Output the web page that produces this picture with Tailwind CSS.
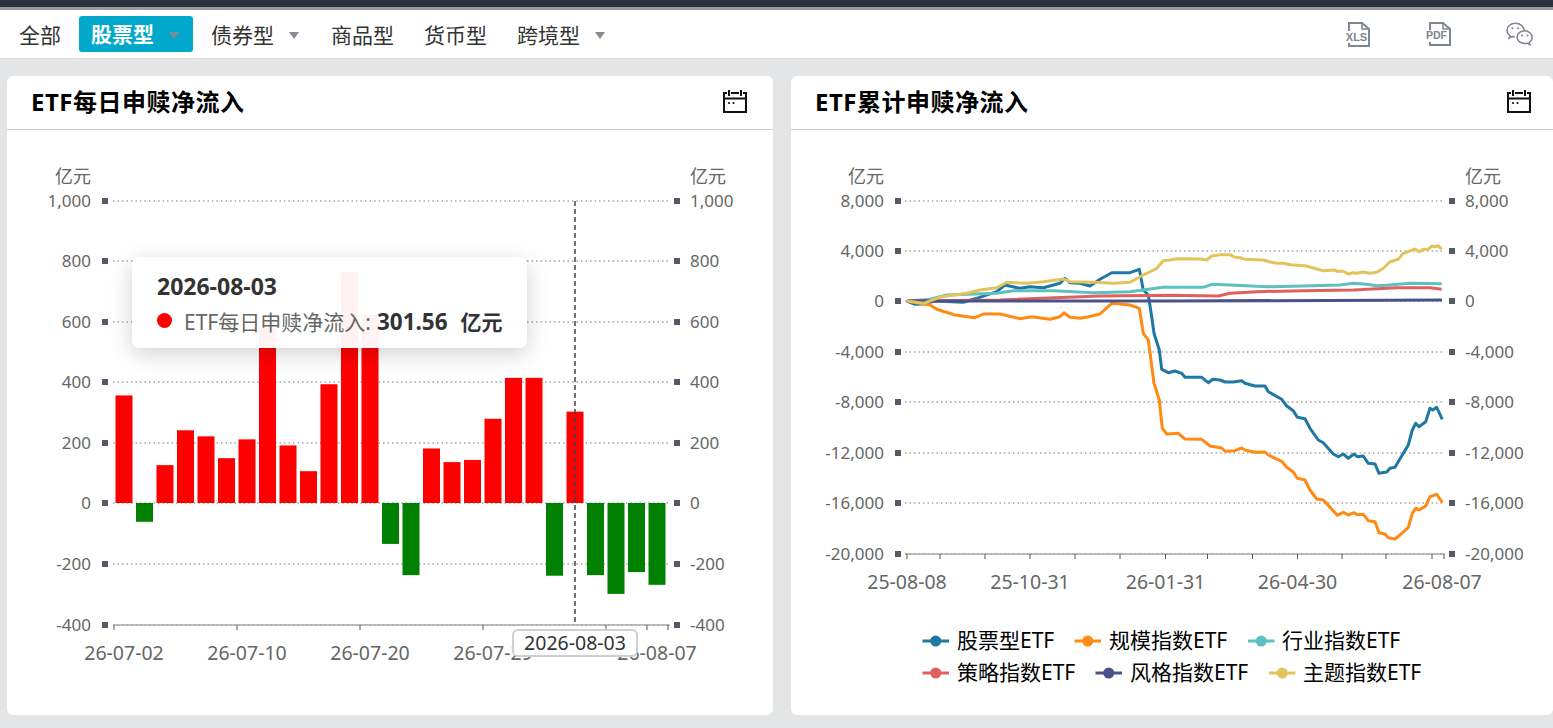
<!DOCTYPE html>
<html lang="zh-CN">
<head>
  <meta charset="UTF-8" />
  <title>ETF申赎</title>
  <script src="https://cdn.jsdelivr.net/npm/@tailwindcss/browser@4"></script>
</head>
<body class="h-[728px] overflow-hidden bg-[#e4e5e7] font-['Noto_Sans','Noto_Sans_CJK_SC',sans-serif] text-[#333]">
  <div class="h-[7px] bg-[#2d2f3a]"></div>
  <div class="h-[3px] bg-[#9a9a9a]"></div>

  <!-- tabs -->
  <nav class="flex h-[49px] items-center border-b border-[#dcdcdc] bg-white pl-[19px] pr-[19px] text-[21px]">
    <a class="mr-[17px] w-[43px] whitespace-nowrap pt-[3px]">全部</a>
    <a class="mr-[18px] flex h-[36px] w-[114px] items-center rounded-[3px] bg-[#00a9cb] pl-[12px] pt-[2px] font-bold text-white">
      股票型<span class="ml-[15px] h-0 w-0 border-x-[5px] border-t-[7px] border-x-transparent border-t-[#7f8b97]"></span>
    </a>
    <a class="flex items-center pt-[3px]">债券型<span class="ml-[15px] h-0 w-0 border-x-[5px] border-t-[7px] border-x-transparent border-t-[#868b95]"></span></a>
    <a class="ml-[32px] pt-[3px]">商品型</a>
    <a class="ml-[30px] pt-[3px]">货币型</a>
    <a class="ml-[30px] flex items-center pt-[3px]">跨境型<span class="ml-[15px] h-0 w-0 border-x-[5px] border-t-[7px] border-x-transparent border-t-[#868b95]"></span></a>
    <div class="ml-auto flex items-center">
      <svg width="27" height="27" viewBox="0 0 27 27" class="mr-[53px]" fill="none" stroke="#7f8691" stroke-width="2">
        <path d="M4 10V2h13l7 6v17H4v-3" /><path d="M17 2v6h7" stroke-width="1.500" />
        <text x="11.500" y="20" text-anchor="middle" font-size="11" font-weight="700" fill="#7f8691" stroke="none" font-family="Liberation Sans">XLS</text>
      </svg>
      <svg width="27" height="27" viewBox="0 0 27 27" class="mr-[54px]" fill="none" stroke="#7f8691" stroke-width="2">
        <path d="M5 9V2h13l7 6v16H5v-3" /><path d="M18 2v6h7" stroke-width="1.500" />
        <text x="11.500" y="18" text-anchor="middle" font-size="10.500" font-weight="700" fill="#7f8691" stroke="none" font-family="Liberation Sans">PDF</text>
      </svg>
      <svg width="28" height="24" viewBox="0 0 28 24" fill="none" stroke="#7f8691" stroke-width="1.500">
        <path d="M9.500 1.200C4.900 1.200 1 4.300 1 8.200c0 2.200 1.200 4 3 5.300l-.8 2.500 3-1.500c.9.300 1.700.400 2.600.400" />
        <path d="M18.500 8.800c-.6-4.300-4.300-7.600-9-7.600" />
        <path d="M18.800 8.700c-4.300 0-7.800 2.900-7.800 6.400s3.500 6.400 7.800 6.400c.8 0 1.600-.1 2.300-.3l2.700 1.500-.7-2.400c1.800-1.200 3-3 3-4.900 0-3.500-3.500-6.700-7.300-6.700z" />
        <circle cx="6.500" cy="6.200" r="1" fill="#7f8691" stroke="none" /><circle cx="12" cy="6.200" r="1" fill="#7f8691" stroke="none" />
        <circle cx="16" cy="13.500" r="1" fill="#7f8691" stroke="none" /><circle cx="21.500" cy="13.500" r="1" fill="#7f8691" stroke="none" />
      </svg>
    </div>
  </nav>

  <main class="mt-[17px] flex gap-[18px] pl-[7px]">
    <!-- daily -->
    <section class="relative h-[639px] w-[766px] rounded-[6px] bg-white">
      <header class="flex h-[54px] items-center justify-between border-b border-[#ccc] pb-[2px] pl-[24px] pr-[26px]">
        <h2 class="text-[24px] leading-none font-bold tracking-[0.5px] text-black">ETF每日申赎净流入</h2>
        <svg width="24" height="23" viewBox="0 0 24 23" fill="none" stroke="#111" stroke-width="2">
          <path d="M4 3H1v19h22V3h-3M8 3h8M1 8.500h22" /><path d="M6 0v6M18 0v6" />
          <circle cx="6" cy="13" r="1.100" fill="#111" stroke="none" /><circle cx="10.500" cy="13" r="1.100" fill="#111" stroke="none" />
        </svg>
      </header>
      <svg id="daily" width="766" height="585" viewBox="7 130 766 585" class="block"></svg>

      <div class="absolute top-[181px] left-[125px] h-[91px] w-[395px] rounded-[8px] bg-white/95 pt-[14px] pl-[25px] shadow-[0_6px_22px_rgba(0,0,0,0.18)]">
        <div class="text-[23px] leading-[30px] font-bold text-[#333]">2026-08-03</div>
        <div class="mt-[2px] flex items-center whitespace-nowrap leading-[32px]">
          <span class="h-[15px] w-[15px] rounded-full bg-[#ff0000]"></span>
          <span class="ml-[12px] pt-[3px] text-[21px] text-[#666]">ETF每日申赎净流入:</span>
          <span class="ml-[6px] pt-[3px] text-[22.500px] font-bold">301.56</span>
          <span class="ml-[13px] pt-[3px] text-[21px] font-bold">亿元</span>
        </div>
      </div>
      <div class="absolute top-[553px] left-[505px] flex h-[28px] w-[126px] items-center justify-center rounded-[6px] border-2 border-[#d0d0d4] bg-white text-[19.500px] text-[#333]">2026-08-03</div>
    </section>

    <!-- cumulative -->
    <section class="h-[639px] flex-1 rounded-[6px] bg-white">
      <header class="flex h-[54px] items-center justify-between border-b border-[#ccc] pb-[2px] pl-[24px] pr-[22px]">
        <h2 class="text-[24px] leading-none font-bold tracking-[0.5px] text-black">ETF累计申赎净流入</h2>
        <svg width="24" height="23" viewBox="0 0 24 23" fill="none" stroke="#111" stroke-width="2">
          <path d="M4 3H1v19h22V3h-3M8 3h8M1 8.500h22" /><path d="M6 0v6M18 0v6" />
          <circle cx="6" cy="13" r="1.100" fill="#111" stroke="none" /><circle cx="10.500" cy="13" r="1.100" fill="#111" stroke="none" />
        </svg>
      </header>
      <svg id="total" width="762" height="585" viewBox="791 130 762 585" class="block"></svg>
    </section>
  </main>

  <script>
    const grey = '#666';

    function txt(x, y, s, anchor, size, fill) {
      return `<text x="${x}" y="${y}" text-anchor="${anchor}" dominant-baseline="central" font-size="${size}" fill="${fill}">${s}</text>`;
    }

    // shared frame of both charts: dotted grid, square ticks, value labels, x axis
    function frame(o) {
      let out = '';
      o.rows.forEach(([y, label]) => {
        out += `<line x1="${o.x0}" x2="${o.x1}" y1="${y}" y2="${y}" stroke="#a5a5a5" stroke-width="1.500" stroke-dasharray="1.500 3" />`;
        out += `<rect x="${o.tl}" y="${y - 3}" width="6" height="6" fill="#555a66" />`;
        out += `<rect x="${o.tr}" y="${y - 3}" width="6" height="6" fill="#555a66" />`;
        out += txt(o.ll, y - 1, label, 'end', 17, grey) + txt(o.lr, y - 1, label, 'start', 17, grey);
      });
      out += txt(o.ll, 176, '亿元', 'end', 18, grey) + txt(o.lr, 176, '亿元', 'start', 18, grey);
      out += `<line x1="${o.x0}" x2="${o.x1}" y1="${o.base}" y2="${o.base}" stroke="#aaa" stroke-width="1.500" />`;
      o.ticks.forEach(x => { out += `<line x1="${x}" x2="${x}" y1="${o.base}" y2="${o.base + 5}" stroke="#555" />`; });
      o.dates.forEach(([x, s]) => { out += txt(x, o.base + 27, s, 'middle', 19.5, grey); });
      return out;
    }

    // daily chart
    const dailyVals = [355, -62, 125, 240, 220, 148, 210, 577, 190, 105, 392, 762, 620, -135, -238, 180, 135, 142, 278, 413, 413, -240, 301.56, -238, -300, -228, -270];
    let daily = frame({
      x0: 113, x1: 670, tl: 102, tr: 674, ll: 91, lr: 690, base: 625,
      rows: [[201, '1,000'], [261, '800'], [322, '600'], [382, '400'], [443, '200'], [503, '0'], [564, '-200'], [625, '-400']],
      ticks: [114, 237, 360, 483, 606, 647, 668],
      dates: [[124, '26-07-02'], [247, '26-07-10'], [370, '26-07-20'], [493, '26-07-29'], [657, '26-08-07']]
    });
    dailyVals.forEach((v, i) => {
      const cx = 124 + i * 20.5, h = Math.abs(v) * 0.303, y = v > 0 ? 503 - h : 503;
      daily += `<rect x="${cx - 8.5}" y="${y}" width="17" height="${h}" fill="${v > 0 ? '#ff0000' : '#008000'}" />`;
    });
    daily += `<line x1="575" x2="575" y1="201" y2="625" stroke="#444" stroke-width="1.500" stroke-dasharray="5 3" />`;
    document.getElementById('daily').innerHTML = daily;

    // cumulative chart, points traced from the picture
    const a = (x, y) => [880 + x / 3, 240 + y / 3];
    const b = (x, y) => [1130 + x / 3, 320 + y / 3];
    const c = (x, y) => [1170 + x / 3, 240 + y / 3];
    const pts = (fn, list) => list.map(p => fn(p[0], p[1]));
    const series = [
      ['#1f78a4', [
        ...pts(a, [[80,183],[105,193],[130,192],[165,183],[215,185],[250,187],[290,175],[350,155],[375,135],[420,145],[450,140],[490,143],[540,130],[555,115],[570,128],[600,130],[630,138],[660,118],[695,98],[750,98],[778,88],[790,150],[805,165],[815,230]]),
        ...pts(b, [[72,40],[88,90],[95,148],[115,158],[135,153],[155,160],[165,172],[215,172],[235,188],[248,178],[270,180],[285,186],[310,186],[335,182],[345,190],[375,198],[405,198],[415,215],[455,238],[470,258],[490,272],[502,292],[525,296],[540,325],[565,360],[580,368],[610,402],[625,410],[640,402],[655,415],[672,402],[682,410],[700,408],[715,430],[735,432],[747,460],[770,456],[780,445],[795,442],[835,375],[847,330],[857,310],[867,320],[887,305],[900,265],[908,270],[920,262],[937,298]])
      ]],
      ['#ff8a14', [
        ...pts(a, [[80,183],[150,195],[170,208],[225,225],[285,233],[310,222],[360,222],[420,236],[455,230],[510,238],[540,230],[552,218],[570,232],[600,235],[625,230],[660,222],[695,190],[750,195],[778,205],[790,280],[805,300]]),
        ...pts(b, [[72,190],[88,240],[97,325],[110,342],[145,340],[165,357],[215,358],[240,378],[275,384],[285,394],[315,392],[335,384],[345,390],[375,397],[405,396],[415,405],[455,424],[470,442],[490,456],[502,475],[525,480],[540,510],[560,537],[580,540],[622,586],[640,577],[655,585],[672,578],[682,584],[700,583],[715,602],[735,605],[747,638],[765,642],[775,653],[795,657],[810,645],[835,622],[847,580],[857,565],[867,570],[887,558],[900,530],[920,523],[937,547]])
      ]],
      ['#5fc0c0', [
        ...pts(a, [[80,183],[150,178],[200,165],[350,160],[400,152],[520,152],[640,158],[750,155],[850,142]]),
        ...pts(c, [[0,142],[100,142],[125,133],[180,135],[290,140],[400,138],[510,135],[550,130],[590,133],[620,137],[650,136],[720,130],[815,131]])
      ]],
      ['#e06060', [
        [907,301],[1000,300],[1100,296],
        ...pts(c, [[0,166],[145,168],[180,160],[260,155],[400,152],[550,150],[680,143],[780,143],[815,148]])
      ]],
      ['#4a5288', [[907,301],[1170,301],[1442,300]]],
      ['#e3c45c', [
        ...pts(a, [[80,183],[130,190],[185,170],[260,160],[300,150],[350,143],[380,127],[440,130],[490,125],[550,117],[570,125],[640,127],[700,130],[750,127],[790,105],[830,85],[850,62]]),
        ...pts(c, [[0,60],[20,56],[90,57],[110,60],[125,48],[150,44],[180,44],[195,52],[210,53],[225,58],[280,60],[300,66],[320,70],[340,70],[360,74],[405,77],[430,84],[460,92],[495,90],[500,94],[520,94],[535,102],[550,98],[560,100],[580,96],[600,100],[620,97],[640,85],[660,65],[685,58],[700,40],[735,27],[748,35],[760,28],[775,28],[785,18],[795,20],[805,17],[815,28]])
      ]]
    ];
    let total = frame({
      x0: 905, x1: 1445, tl: 895, tr: 1449, ll: 884, lr: 1465, base: 554,
      rows: [[201, '8,000'], [251, '4,000'], [301, '0'], [352, '-4,000'], [402, '-8,000'], [453, '-12,000'], [503, '-16,000'], [554, '-20,000']],
      ticks: [907, 940, 985, 1030, 1075, 1120, 1165.5, 1207.5, 1252.5, 1297.5, 1342, 1386, 1432, 1444],
      dates: [[907, '25-08-08'], [1030, '25-10-31'], [1165.5, '26-01-31'], [1297.5, '26-04-30'], [1442, '26-08-07']]
    });
    series.forEach(([color, p]) => {
      total += `<polyline fill="none" stroke="${color}" stroke-width="3" stroke-linejoin="round" points="${p.map(q => q[0].toFixed(1) + ',' + q[1].toFixed(1)).join(' ')}" />`;
    });

    // legend: line start, text start, row y
    [
      [922.5, 957, 641, '股票型ETF', 0],
      [1074.5, 1109, 641, '规模指数ETF', 1],
      [1248, 1282, 641, '行业指数ETF', 2],
      [922.5, 957, 673, '策略指数ETF', 3],
      [1095.5, 1130, 673, '风格指数ETF', 4],
      [1269, 1303, 673, '主题指数ETF', 5]
    ].forEach(([x, tx, y, name, i]) => {
      const color = series[i][0];
      total += `<line x1="${x}" x2="${x + 26.5}" y1="${y}" y2="${y}" stroke="${color}" stroke-width="3" />`;
      total += `<circle cx="${x + 13.25}" cy="${y}" r="5.5" fill="${color}" />`;
      total += txt(tx, y - 1, name, 'start', 21, '#000');
    });
    document.getElementById('total').innerHTML = total;
  </script>
</body>
</html>
